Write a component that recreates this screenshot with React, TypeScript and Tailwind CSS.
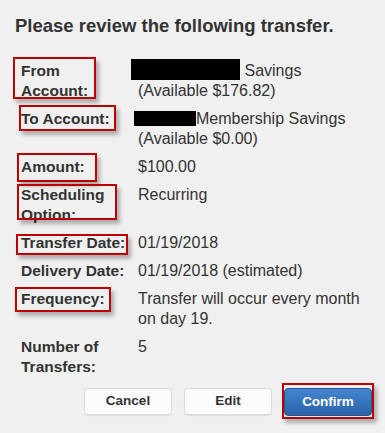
import React from 'react'

// red annotation frame drawn over a label
function Mark({ className }: { className: string }) {
  return (
    <span
      className={`pointer-events-none absolute border-2 border-[#c00000] shadow-[3px_4px_4px_rgba(0,0,0,0.28)] ${className}`}
    />
  )
}

function Label({ children, mark }: { children: React.ReactNode; mark?: string }) {
  return (
    <div className="relative pr-2 text-[15.5px] font-bold">
      {children}
      {mark && <Mark className={mark} />}
    </div>
  )
}

function Value({ children }: { children: React.ReactNode }) {
  return <div className="text-[16px]">{children}</div>
}

export default function App() {
  return (
    <div className="h-[433px] w-[385px] overflow-hidden bg-[#f0f0f0] font-['Liberation_Sans',Arial,sans-serif] text-[#333]">
      <h1 className="pl-[15px] pt-[14px] text-[18.5px] font-bold leading-[24px]">
        Please review the following transfer.
      </h1>

      <div className="mt-[23px] grid grid-cols-[117px_1fr] gap-y-2 pl-[21px] leading-5">
        <Label mark="-left-[8px] -top-[4px] h-[42px] w-[83px]">
          From
          <br />
          Account:
        </Label>
        <Value>
          <span className="relative -top-[2px] -mb-[1px] -ml-[7px] inline-block h-[21px] w-[109px] bg-black align-top" />{' '}
          Savings
          <br />
          (Available $176.82)
        </Value>

        <Label mark="-left-[2px] -top-[4px] h-[26px] w-[97px]">To Account:</Label>
        <Value>
          <span className="relative top-[2px] -ml-[4px] inline-block h-[15px] w-[62px] bg-black align-top" />
          Membership Savings
          <br />
          (Available $0.00)
        </Value>

        <Label mark="-left-[4px] -top-[4px] h-[29px] w-[80px]">Amount:</Label>
        <Value>$100.00</Value>

        <Label mark="-left-[4px] -top-[1px] h-[36px] w-[100px]">
          Scheduling
          <br />
          Option:
        </Label>
        <Value>Recurring</Value>

        <Label mark="-left-[5px] top-[1px] h-[21px] w-[112px]">Transfer Date:</Label>
        <Value>01/19/2018</Value>

        <Label>Delivery Date:</Label>
        <Value>01/19/2018 (estimated)</Value>

        <Label mark="-left-[6px] -top-[2px] h-[25px] w-[96px]">Frequency:</Label>
        <Value>
          Transfer will occur every month
          <br />
          on day 19.
        </Value>

        <Label>
          Number of
          <br />
          Transfers:
        </Label>
        <Value>5</Value>
      </div>

      <div className="mt-[11px] flex justify-end gap-3 pr-[13px] text-[13.5px] font-bold">
        <button className="h-[27px] w-[88px] rounded-[4px] border border-[#dcdcdc] bg-[#fbfbfb] text-[#333] shadow-[0_1px_1px_rgba(0,0,0,0.08)]">
          Cancel
        </button>
        <button className="h-[27px] w-[88px] rounded-[4px] border border-[#dcdcdc] bg-[#fbfbfb] text-[#333] shadow-[0_1px_1px_rgba(0,0,0,0.08)]">
          Edit
        </button>
        <div className="relative">
          <button className="h-[28px] w-[88px] rounded-[4px] border border-[#23568f] bg-gradient-to-b from-[#4585d1] to-[#2a63a8] text-white">
            Confirm
          </button>
          <Mark className="-left-[2px] -top-[5px] h-[36px] w-[92px]" />
        </div>
      </div>
    </div>
  )
}
